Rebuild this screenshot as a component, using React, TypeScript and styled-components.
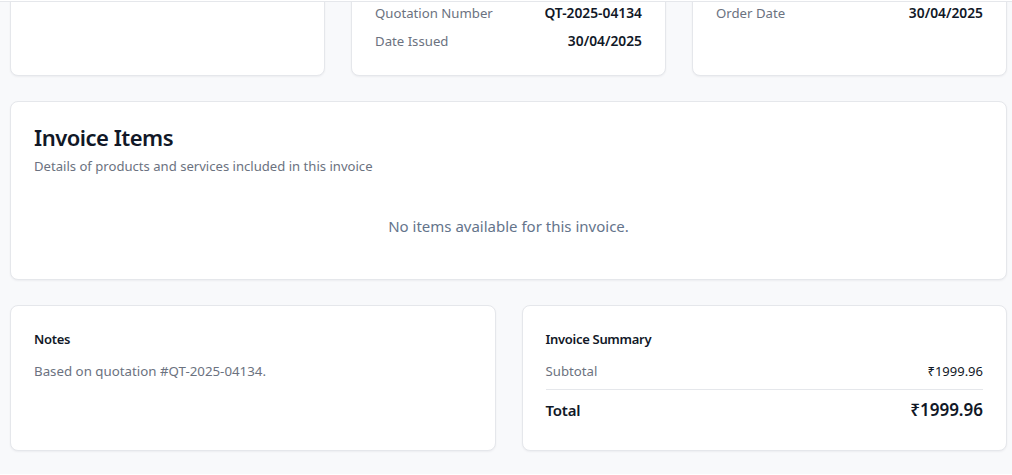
import React from "react";
import styled, { createGlobalStyle } from "styled-components";

const Global = createGlobalStyle`
  html, body { margin: 0; padding: 0; background: #ffffff; }
  body { font-family: "Noto Sans", "Open Sans", Arial, sans-serif; color: #111827; }
  * { box-sizing: border-box; }
`;

const Frame = styled.div`
  margin-top: 1px;
  border-top: 1px solid #e5e7eb;
  background: #f8f9fb;
  height: 473px;
  overflow: hidden;
  padding: 0 5px 0 10px;
`;

const Stack = styled.div`
  display: flex;
  flex-direction: column;
  gap: 25px;
  margin-top: -23px;
`;

const Grid = styled.div<{ $cols: number }>`
  display: grid;
  grid-template-columns: repeat(${(p) => p.$cols}, 1fr);
  gap: 26px;
`;

const Card = styled.div<{ $pb?: number }>`
  background: #ffffff;
  border: 1px solid #e5e7eb;
  border-radius: 8px;
  box-shadow: 0 1px 2px rgba(17, 24, 39, 0.05);
  padding: 23px 23px ${(p) => p.$pb ?? 23}px;
`;

const InfoList = styled.div`
  display: flex;
  flex-direction: column;
  gap: 8px;
`;

const InfoRow = styled.div`
  display: flex;
  justify-content: space-between;
  align-items: center;
  font-size: 13.2px;
  line-height: 20px;
`;

const Label = styled.span`
  color: #6b7280;
`;

const Value = styled.span`
  color: #111827;
  font-weight: 600;
  font-size: 13.8px;
`;

const Title = styled.h2`
  margin: 0;
  font-size: 22px;
  line-height: 24px;
  font-weight: 600;
  letter-spacing: -0.5px;
  color: #111827;
`;

const Subtitle = styled.p`
  margin: 7px 0 0;
  font-size: 13.1px;
  line-height: 20px;
  color: #6b7280;
`;

const Empty = styled.div`
  padding: 38px 0 18px;
  text-align: center;
  font-size: 15px;
  line-height: 24px;
  color: #64748b;
`;

const SectionTitle = styled.h3`
  margin: 0 0 12px;
  font-size: 13px;
  line-height: 20px;
  font-weight: 600;
  letter-spacing: -0.3px;
  color: #111827;
`;

const NoteText = styled.p`
  margin: 0;
  font-size: 13.3px;
  line-height: 20px;
  color: #6b7280;
`;

const SumRow = styled.div<{ $total?: boolean }>`
  display: flex;
  justify-content: space-between;
  align-items: center;
  font-size: 13.2px;
  line-height: 20px;
  padding: ${(p) => (p.$total ? "6px 0 0" : "0 0 8px")};
  border-bottom: ${(p) => (p.$total ? "none" : "1px solid #e5e7eb")};
`;

const TotalLabel = styled.span`
  font-size: 15px;
  line-height: 24px;
  font-weight: 600;
  letter-spacing: -0.2px;
  color: #111827;
`;

const TotalValue = styled.span`
  font-size: 17px;
  line-height: 28px;
  font-weight: 600;
  color: #111827;
`;

const Amount = styled.span`
  font-size: 13px;
  color: #111827;
`;

export default function App() {
  return (
    <>
      <Global />
      <Frame>
        <Stack>
          <Grid $cols={3}>
            <Card $pb={24}>
              <InfoList />
            </Card>
            <Card $pb={24}>
              <InfoList>
                <InfoRow>
                  <Label>Quotation Number</Label>
                  <Value>QT-2025-04134</Value>
                </InfoRow>
                <InfoRow>
                  <Label>Date Issued</Label>
                  <Value>30/04/2025</Value>
                </InfoRow>
              </InfoList>
            </Card>
            <Card $pb={24}>
              <InfoList>
                <InfoRow>
                  <Label>Order Date</Label>
                  <Value>30/04/2025</Value>
                </InfoRow>
              </InfoList>
            </Card>
          </Grid>

          <Card>
            <Title>Invoice Items</Title>
            <Subtitle>Details of products and services included in this invoice</Subtitle>
            <Empty>No items available for this invoice.</Empty>
          </Card>

          <Grid $cols={2}>
            <Card $pb={26}>
              <SectionTitle>Notes</SectionTitle>
              <NoteText>Based on quotation #QT-2025-04134.</NoteText>
            </Card>
            <Card $pb={26}>
              <SectionTitle>Invoice Summary</SectionTitle>
              <SumRow>
                <Label>Subtotal</Label>
                <Amount>₹1999.96</Amount>
              </SumRow>
              <SumRow $total>
                <TotalLabel>Total</TotalLabel>
                <TotalValue>₹1999.96</TotalValue>
              </SumRow>
            </Card>
          </Grid>
        </Stack>
      </Frame>
    </>
  );
}
